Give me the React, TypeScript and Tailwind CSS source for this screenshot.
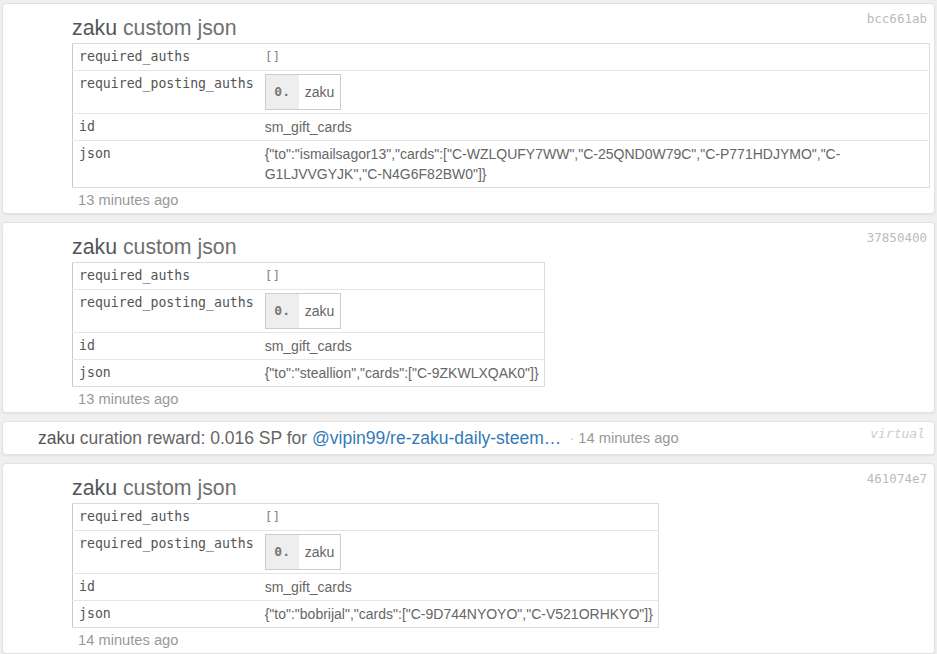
const mono = { fontFamily: '"DejaVu Sans Mono", "Liberation Mono", monospace' };

type Op = {
  hash: string;
  json: string;
  ago: string;
};

const ops: Op[] = [
  {
    hash: 'bcc661ab',
    json: '{"to":"ismailsagor13","cards":["C-WZLQUFY7WW","C-25QND0W79C","C-P771HDJYMO","C-G1LJVVGYJK","C-N4G6F82BW0"]}',
    ago: '13 minutes ago',
  },
  {
    hash: '37850400',
    json: '{"to":"steallion","cards":["C-9ZKWLXQAK0"]}',
    ago: '13 minutes ago',
  },
];

const last: Op = {
  hash: '461074e7',
  json: '{"to":"bobrijal","cards":["C-9D744NYOYO","C-V521ORHKYO"]}',
  ago: '14 minutes ago',
};

function Row({ k, children, first }: { k: string; children: React.ReactNode; first?: boolean }) {
  return (
    <tr className={first ? '' : 'border-t border-[#e6e6e6]'}>
      <td
        className="align-top pl-[6px] pr-[5px] py-[3px] text-[13.2px] leading-[20px] text-[#555] whitespace-nowrap"
        style={mono}
      >
        {k}
      </td>
      <td className="align-top pl-[6px] pr-[5px] py-[3px] text-[14px] leading-[20px] text-[#666]">{children}</td>
    </tr>
  );
}

function CustomJson({ op }: { op: Op }) {
  return (
    <div className="relative shrink-0 bg-white border border-[#e2e2e2] rounded-[4px] shadow-[0_1px_2px_rgba(0,0,0,0.06)] pl-[69px] pr-[4px] pt-[10px] pb-[1px]">
      <span className="absolute right-[7px] top-[7px] text-[12.5px] leading-[16px] text-[#bbb]" style={mono}>
        {op.hash}
      </span>
      <h2 className="text-[21.3px] leading-[28px] text-[#707070]">
        <span className="text-[#555]">zaku</span> custom json
      </h2>
      <table className="mt-[1px] border border-[#dcdcdc] border-l-[#c8c8c8] border-collapse">
        <tbody>
          <Row k="required_auths" first>
            <span style={mono} className="block text-[13px] leading-[20px] text-[#888]">[]</span>
          </Row>
          <Row k="required_posting_auths">
            <div className="flex w-fit border border-[#ccc] h-[36px] items-stretch">
              <span
                className="flex items-center justify-center w-[33px] bg-[#eee] text-[13px] font-bold text-[#777]"
                style={mono}
              >
                0.
              </span>
              <span className="flex items-center px-[6px] text-[14px] text-[#666]">zaku</span>
            </div>
          </Row>
          <Row k="id">sm_gift_cards</Row>
          <Row k="json">{op.json}</Row>
        </tbody>
      </table>
      <div className="text-[14.7px] leading-[24px] text-[#999] pl-[6px]">{op.ago}</div>
    </div>
  );
}

function Curation() {
  return (
    <div className="relative shrink-0 bg-white border border-[#e2e2e2] rounded-[4px] shadow-[0_1px_2px_rgba(0,0,0,0.06)] pl-[35px] h-[34px] flex items-center">
      <span className="absolute right-[9px] top-[2px] text-[13px] italic text-[#ccc]" style={mono}>
        virtual
      </span>
      <span className="text-[17.5px] text-[#666]">
        <span className="text-[#555]">zaku</span> curation reward: 0.016 SP for{' '}
        <span className="text-[#337ab7]">@vipin99/re-zaku-daily-steem…</span>
      </span>
      <span className="text-[14.7px] text-[#999] ml-[8px]">
        <span className="text-[#ccc]">·</span> 14 minutes ago
      </span>
    </div>
  );
}

export default function App() {
  return (
    <div
      className="bg-[#efefef] px-[2px] pt-[3px] flex flex-col gap-[8px] overflow-hidden h-[654px]"
      style={{ fontFamily: '"Liberation Sans", Arial, sans-serif' }}
    >
      {ops.map((op) => (
        <CustomJson key={op.hash} op={op} />
      ))}
      <Curation />
      <CustomJson op={last} />
    </div>
  );
}
